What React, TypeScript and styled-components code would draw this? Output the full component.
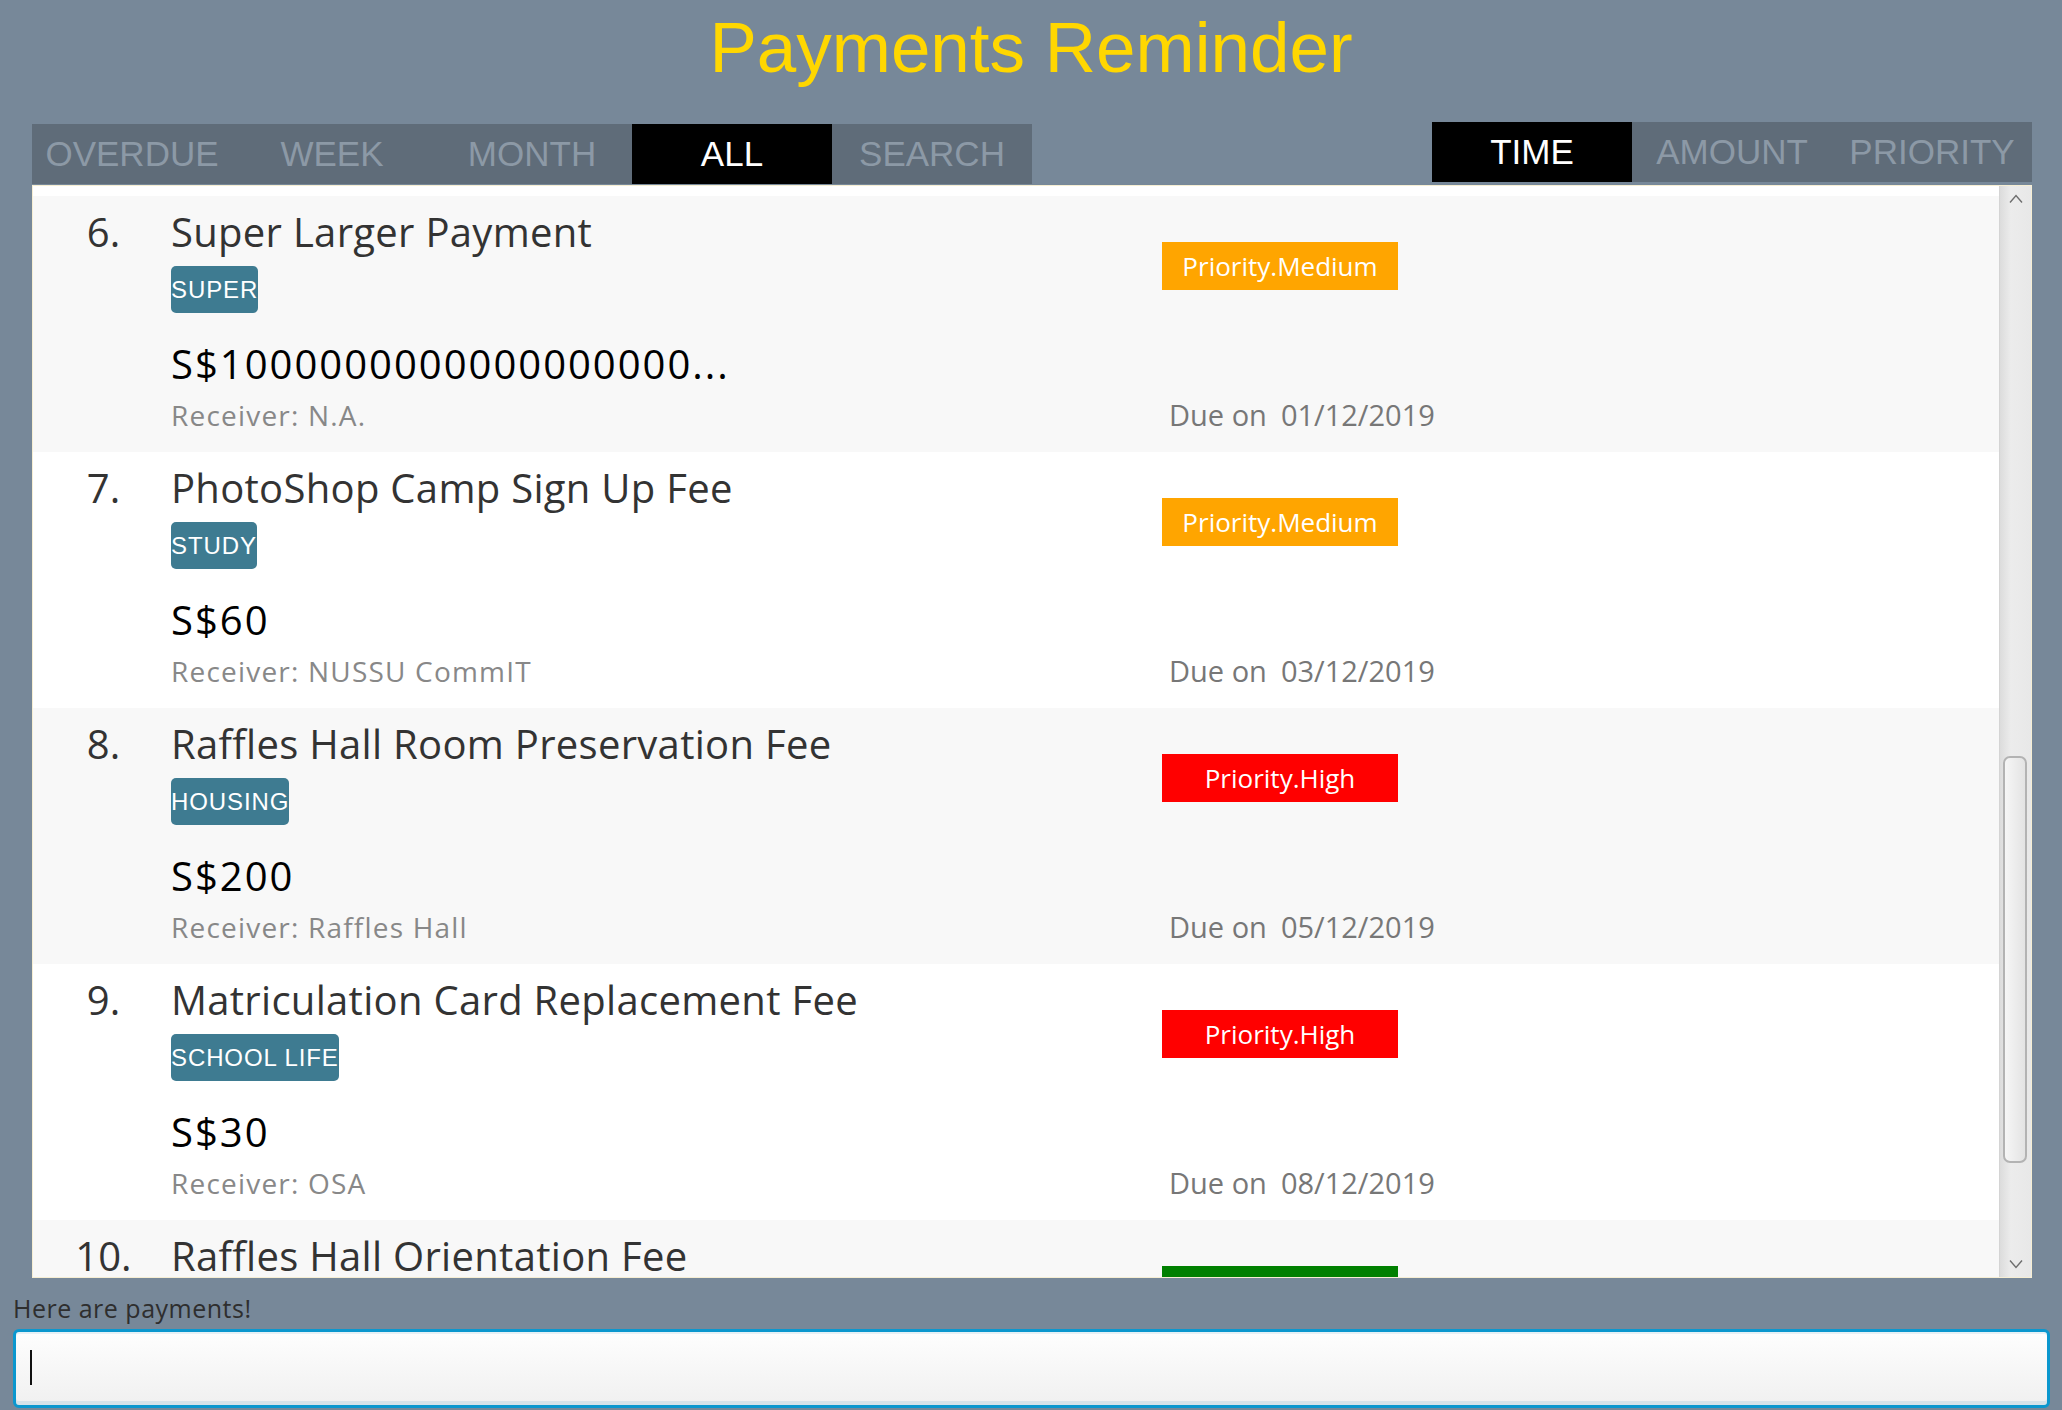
import React from "react";
import styled, { createGlobalStyle } from "styled-components";

type Priority = "High" | "Medium" | "Low";

interface Payment {
  index: number;
  name: string;
  tag: string;
  amount: string;
  receiver: string;
  due: string;
  priority: Priority;
}

const payments: Payment[] = [
  { index: 6, name: "Super Larger Payment", tag: "SUPER", amount: "S$1" + "0".repeat(18) + "...", receiver: "N.A.", due: "01/12/2019", priority: "Medium" },
  { index: 7, name: "PhotoShop Camp Sign Up Fee", tag: "STUDY", amount: "S$60", receiver: "NUSSU CommIT", due: "03/12/2019", priority: "Medium" },
  { index: 8, name: "Raffles Hall Room Preservation Fee", tag: "HOUSING", amount: "S$200", receiver: "Raffles Hall", due: "05/12/2019", priority: "High" },
  { index: 9, name: "Matriculation Card Replacement Fee", tag: "SCHOOL LIFE", amount: "S$30", receiver: "OSA", due: "08/12/2019", priority: "High" },
  { index: 10, name: "Raffles Hall Orientation Fee", tag: "HOUSING", amount: "S$100", receiver: "Raffles Hall", due: "10/12/2019", priority: "Low" },
];

const priorityColor: Record<Priority, string> = {
  High: "#ff0000",
  Medium: "#ffa500",
  Low: "#008000",
};

const filterTabs = ["OVERDUE", "WEEK", "MONTH", "ALL", "SEARCH"];
const sortTabs = ["TIME", "AMOUNT", "PRIORITY"];

const GlobalStyle = createGlobalStyle`
  html, body {
    margin: 0;
    padding: 0;
    background: #778899;
  }
  body {
    width: 2062px;
    height: 1410px;
    overflow: hidden;
    font-family: "Open Sans", "Noto Sans", sans-serif;
  }
  * { box-sizing: border-box; }
`;

const Window = styled.div`
  width: 2062px;
  height: 1410px;
  background: #778899;
  display: flex;
  flex-direction: column;
`;

const Header = styled.header`
  height: 122px;
  padding-top: 8px;
  display: flex;
  justify-content: center;
`;

const Title = styled.h1`
  margin: 0;
  font-family: "Liberation Sans", Arial, sans-serif;
  font-weight: 400;
  font-size: 71px;
  line-height: 80px;
  color: #ffd700;
`;

const TabRow = styled.nav`
  height: 63px;
  padding: 0 30px 0 32px;
  display: flex;
  justify-content: space-between;
  align-items: flex-start;
`;

const TabGroup = styled.div<{ $offset: number }>`
  display: flex;
  background: #5f6c79;
  margin-top: ${(p) => p.$offset}px;
`;

const Tab = styled.div<{ $active?: boolean }>`
  width: 200px;
  height: 60px;
  line-height: 60px;
  text-align: center;
  font-family: "Liberation Sans", Arial, sans-serif;
  font-size: 35px;
  color: ${(p) => (p.$active ? "#ffffff" : "#8c99a6")};
  background: ${(p) => (p.$active ? "#000000" : "transparent")};
`;

const ListPanel = styled.section`
  margin: 0 30px 0 32px;
  height: 1093px;
  border: 1px solid #f6eed3;
  display: flex;
  background: #ffffff;
`;

const Viewport = styled.div`
  flex: 1;
  overflow: hidden;
  padding-top: 10px;
  background: #ffffff;
  display: flex;
  flex-direction: column;
`;

const Cell = styled.article<{ $shaded: boolean }>`
  flex-shrink: 0;
  height: 256px;
  padding: 9px 0 18px;
  display: flex;
  background: ${(p) => (p.$shaded ? "#f8f8f8" : "#ffffff")};
`;

const IndexCol = styled.div`
  width: 138px;
  padding-left: 3px;
  text-align: center;
  font-size: 40px;
  line-height: 54px;
  color: #333333;
`;

const MainCol = styled.div`
  width: 991px;
  display: flex;
  flex-direction: column;
  align-items: flex-start;
`;

const Name = styled.div`
  font-size: 40px;
  line-height: 54px;
  letter-spacing: 0.3px;
  color: #333333;
  white-space: nowrap;
`;

const Tag = styled.span`
  margin-top: 7px;
  height: 47px;
  padding: 0;
  border-radius: 5px;
  background: #3e7b91;
  color: #ffffff;
  font-family: "Liberation Sans", Arial, sans-serif;
  font-size: 24px;
  line-height: 47px;
  letter-spacing: 0.9px;
  white-space: nowrap;
`;

const Amount = styled.div`
  margin-top: 24px;
  font-size: 40px;
  line-height: 54px;
  letter-spacing: 2px;
  color: #000000;
  white-space: nowrap;
`;

const Receiver = styled.div`
  margin-top: 5px;
  font-size: 28px;
  line-height: 38px;
  letter-spacing: 1.2px;
  color: #888888;
  white-space: nowrap;
`;

const SideCol = styled.div`
  display: flex;
  flex-direction: column;
  align-items: flex-start;
`;

const PriorityBadge = styled.div<{ $color: string }>`
  margin-top: 37px;
  width: 236px;
  height: 48px;
  background: ${(p) => p.$color};
  color: #ffffff;
  font-size: 26px;
  line-height: 48px;
  text-align: center;
`;

const Due = styled.div`
  margin-top: auto;
  padding-left: 7px;
  display: flex;
  gap: 14px;
  font-size: 29px;
  line-height: 38px;
  color: #777777;
  white-space: nowrap;
`;

const ScrollBar = styled.div`
  width: 32px;
  flex-shrink: 0;
  border-left: 1px solid #d4d4d4;
  background: linear-gradient(to right, #dcdcdc, #ececec 35%, #e8e8e8);
  display: flex;
  flex-direction: column;
`;

const ArrowBox = styled.div`
  height: 26px;
  display: flex;
  align-items: center;
  justify-content: center;
`;

const Track = styled.div`
  flex: 1;
  padding: 0 4px 0 3px;
`;

const Thumb = styled.div<{ $top: number; $height: number }>`
  margin-top: ${(p) => p.$top}px;
  height: ${(p) => p.$height}px;
  border: 2px solid #b3b3b3;
  border-radius: 7px;
  background: linear-gradient(to right, #f6f6f6, #e3e3e3);
`;

const Footer = styled.footer`
  padding: 15px 12px 0 13px;
  display: flex;
  flex-direction: column;
`;

const ResultText = styled.div`
  font-size: 25px;
  line-height: 30px;
  letter-spacing: 0.5px;
  color: #2e2e2e;
`;

const CommandBox = styled.div`
  margin-top: 6px;
  height: 79px;
  border: 3px solid #0b97ce;
  border-radius: 6px;
  background: linear-gradient(#fefefe, #f0f0f0);
  box-shadow: inset 0 -4px 0 #d6e3e9, inset 0 2px 0 #e6f1f6;
  padding: 18px 14px;
`;

const Caret = styled.span`
  display: block;
  width: 2px;
  height: 35px;
  background: #111111;
`;

const Chevron: React.FC<{ dir: "up" | "down" }> = ({ dir }) => (
  <svg width="16" height="10" viewBox="0 0 16 10">
    <polyline
      points={dir === "up" ? "2,8.5 8,1.5 14,8.5" : "2,1.5 8,8.5 14,1.5"}
      fill="none"
      stroke="#6e6e6e"
      strokeWidth="1.4"
    />
  </svg>
);

const PaymentCell: React.FC<{ p: Payment }> = ({ p }) => (
  <Cell $shaded={p.index % 2 === 0}>
    <IndexCol>{p.index}.</IndexCol>
    <MainCol>
      <Name>{p.name}</Name>
      <Tag>{p.tag}</Tag>
      <Amount>{p.amount}</Amount>
      <Receiver>Receiver: {p.receiver}</Receiver>
    </MainCol>
    <SideCol>
      <PriorityBadge $color={priorityColor[p.priority]}>Priority.{p.priority}</PriorityBadge>
      <Due>
        <span>Due on</span>
        <span>{p.due}</span>
      </Due>
    </SideCol>
  </Cell>
);

export default function App() {
  const activeFilter = "ALL";
  const activeSort = "TIME";
  return (
    <Window>
      <GlobalStyle />
      <Header>
        <Title>Payments Reminder</Title>
      </Header>
      <TabRow>
        <TabGroup $offset={2}>
          {filterTabs.map((t) => (
            <Tab key={t} $active={t === activeFilter}>
              {t}
            </Tab>
          ))}
        </TabGroup>
        <TabGroup $offset={0}>
          {sortTabs.map((t) => (
            <Tab key={t} $active={t === activeSort}>
              {t}
            </Tab>
          ))}
        </TabGroup>
      </TabRow>
      <ListPanel>
        <Viewport>
          {payments.map((p) => (
            <PaymentCell key={p.index} p={p} />
          ))}
        </Viewport>
        <ScrollBar>
          <ArrowBox>
            <Chevron dir="up" />
          </ArrowBox>
          <Track>
            <Thumb $top={544} $height={407} />
          </Track>
          <ArrowBox>
            <Chevron dir="down" />
          </ArrowBox>
        </ScrollBar>
      </ListPanel>
      <Footer>
        <ResultText>Here are payments!</ResultText>
        <CommandBox>
          <Caret />
        </CommandBox>
      </Footer>
    </Window>
  );
}
